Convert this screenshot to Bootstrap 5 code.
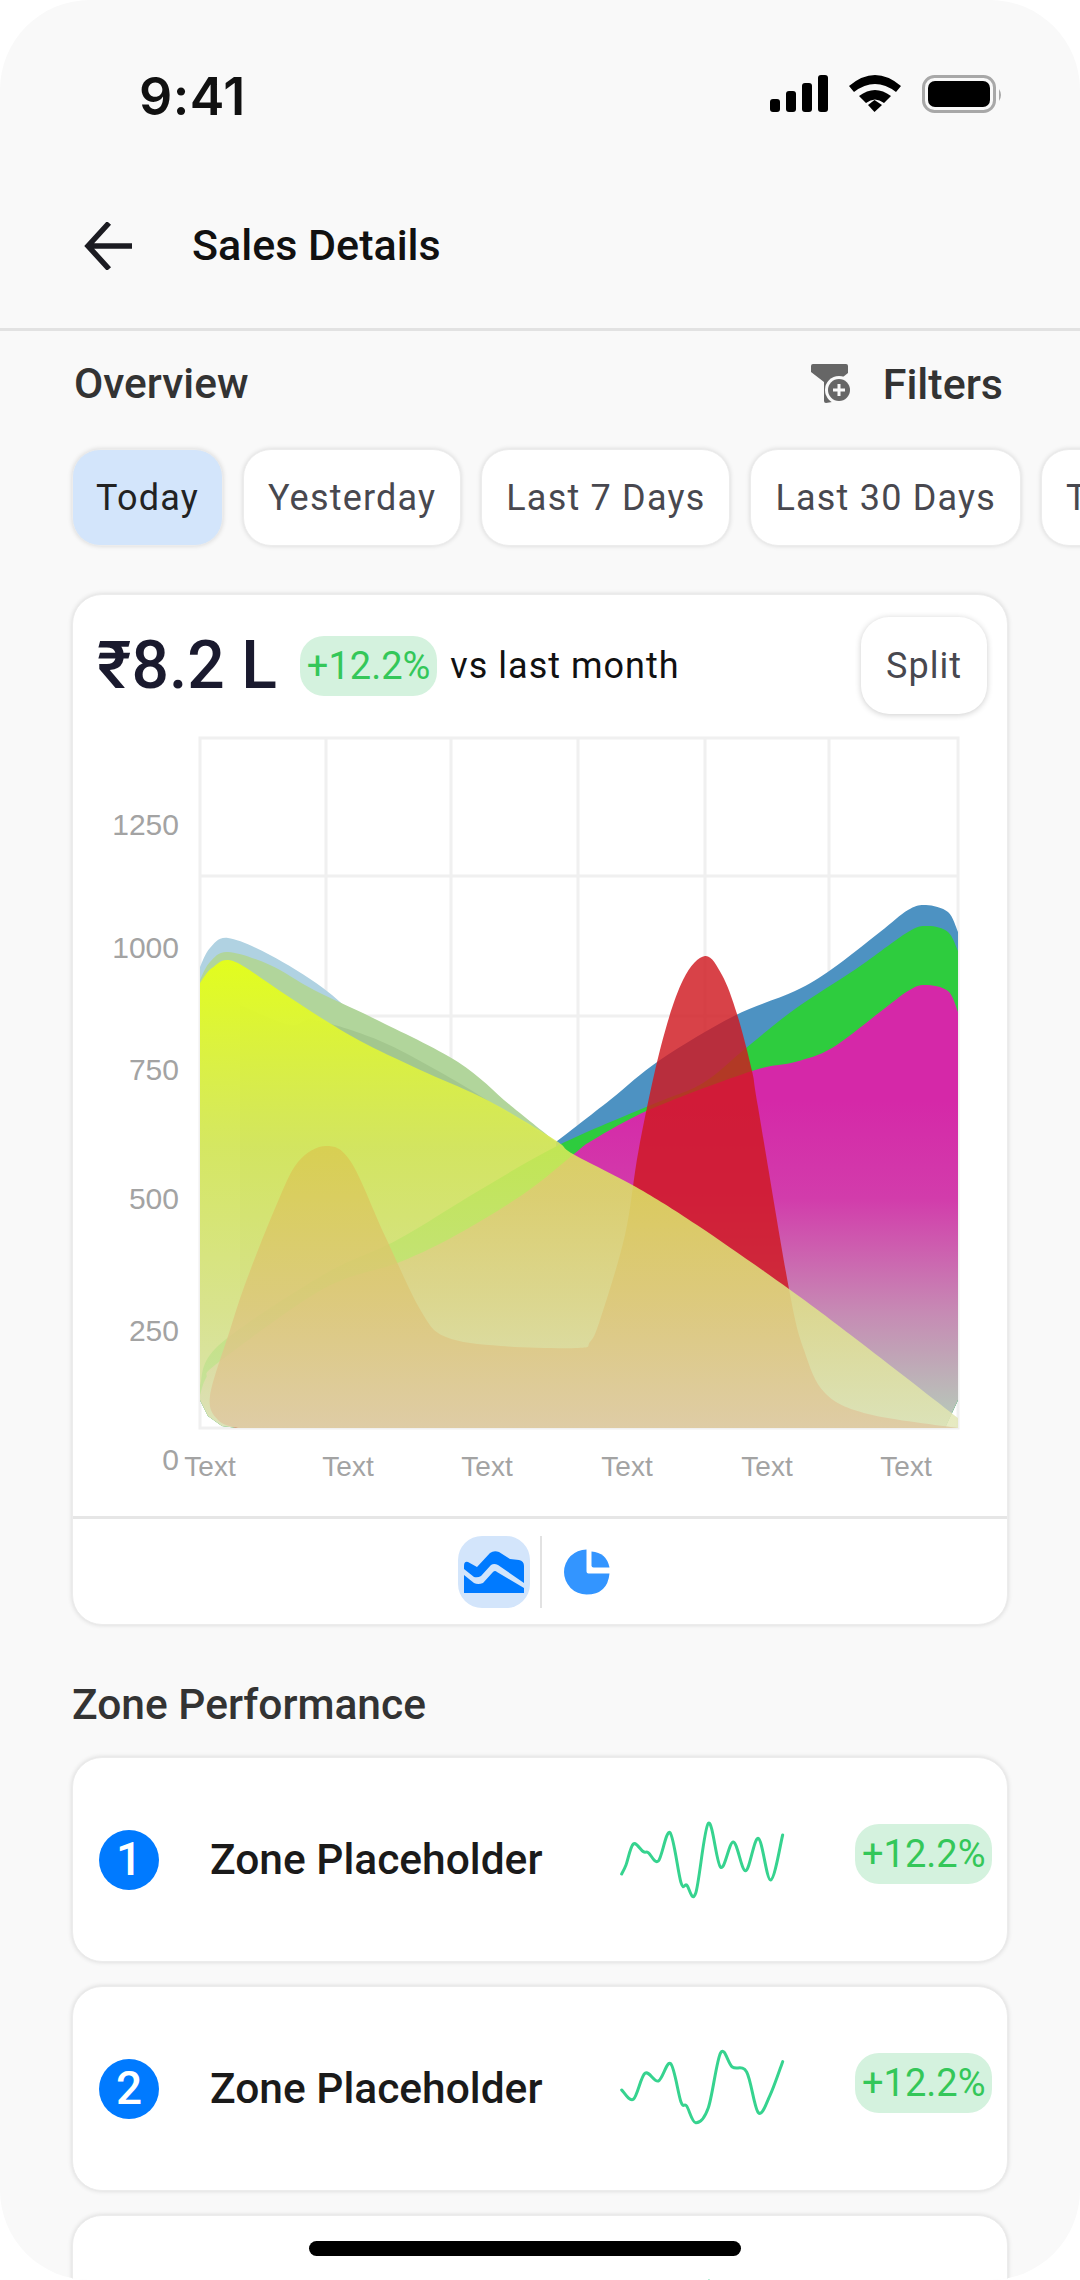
<!DOCTYPE html>
<html lang="en">
  <head>
    <meta charset="UTF-8" />
    <title>Sales Details</title>
    <link href="https://cdn.jsdelivr.net/npm/bootstrap@5.3.3/dist/css/bootstrap.min.css" rel="stylesheet" />
    <style>
      html, body { margin: 0; background: #fff; }
      .screen { width: 1080px; height: 2280px; border-radius: 90px; background: #f9f9f9; overflow: hidden; position: relative; font-family: Roboto, sans-serif; }
      .status-row { height: 170px; padding: 73px 76px 0 139px; }
      .status-time { font-family: Inter, sans-serif; font-weight: 600; font-size: 52px; letter-spacing: .5px; line-height: 48px; color: #111; }
      .status-icons { margin-top: -1px; }
      .top-nav { height: 161px; padding: 0 0 6px 84px; border-bottom: 3px solid #e2e2e2; }
      .top-title { margin: 0 0 0 60px; font-size: 43px; font-weight: 500; color: #111; }
      .page-body { padding: 0 72px; }
      .overview-row { height: 106px; padding: 0 5px 0 2px; margin-bottom: 12px; }
      .section-name { margin: 0; font-size: 42.5px; font-weight: 500; color: #333; line-height: 48px; }
      .filter-text { margin-left: 31px; font-size: 43px; font-weight: 500; color: #333; line-height: 48px; }
      .chip-row { gap: 20px; margin-bottom: 48px; width: 1100px; }
      .chip-btn { height: 97px; padding: 0 24px; flex: none; font-size: 36px; letter-spacing: 1.2px; color: #48484f; background: #fff; border: 1px solid #ececec; border-radius: 28px; box-shadow: 0 0 5px rgba(0,0,0,.14); }
      .chip-btn.is-on { padding: 0 23px; background: #d3e5fb; color: #222; }
      .panel { background: #fff; border: 1px solid #ececec; border-radius: 30px; box-shadow: 0 0 5px rgba(0,0,0,.14); }
      .chart-head { padding: 22px 20px 0 24px; height: 119px; }
      .big-value { margin-right: 23px; font-size: 66px; font-weight: 500; line-height: 97px; color: #1a1a2e; }
      .up-pill { display: inline-block; background: #d4f2de; color: #34c759; font-size: 38px; line-height: 60px; height: 60px; padding: 0 7px; border-radius: 24px; }
      .vs-text { margin-left: 13px; font-size: 36px; letter-spacing: 1px; color: #111; }
      .split-btn { width: 126px; height: 97px; padding: 0; font-size: 36px; letter-spacing: 1px; color: #48484f; background: #fff; border: 0; border-radius: 28px; box-shadow: 0 1px 6px rgba(0,0,0,.2); }
      .chart-svg { display: block; width: 934px; height: 802px; }
      .chart-svg text { font-family: "Liberation Sans", Arial, sans-serif; font-size: 28px; fill: #a3a3a3; }
      .chart-svg .y-tick text { font-size: 30px; }
      .chart-foot { height: 108px; border-top: 3px solid #e6e6e6; padding-top: 17px; }
      .view-btn { width: 72px; height: 72px; border-radius: 24px; }
      .view-btn.is-on { background: #d3e5fb; }
      .view-sep { width: 2px; height: 72px; background: #e2e2e2; margin: 0 9px 0 10px; }
      .zone-title { margin: 56px 0 28px 0; }
      .zone-list { gap: 24px; }
      .zone-row { height: 205px; padding: 0 14px 0 26px; }
      .rank-dot { width: 60px; height: 60px; flex: none; border-radius: 50%; background: #007aff; color: #fff; font-size: 46px; font-weight: 500; }
      .zone-name { margin-left: 51px; width: 410px; flex: none; font-size: 42.5px; font-weight: 500; color: #1a1a1a; white-space: nowrap; }
      .zone-spark { width: 165px; height: 80px; flex: none; }
      .zone-spark path { fill: none; stroke: #36d38f; stroke-width: 9; stroke-linecap: round; }
      .zone-pill { margin: 0 0 12px 70px; flex: none; }
      .home-bar { position: absolute; left: 309px; top: 2241px; width: 432px; height: 15px; border-radius: 8px; background: #000; }
    </style>
  </head>
  <body>
    <div class="screen">
      <div class="status-row d-flex justify-content-between">
        <div class="status-time">9:41</div>
        <svg class="status-icons" width="234" height="44" viewBox="771 74 234 44">
          <rect x="771" y="101" width="10" height="13" rx="3" />
          <rect x="787" y="93" width="10" height="21" rx="3" />
          <rect x="803" y="85" width="10" height="29" rx="3" />
          <rect x="819" y="77" width="10" height="37" rx="3" />
          <path d="M850 88 Q876 66 902 88 L897 94 Q876 78 855 94 Z" />
          <path d="M860 98 Q876 86 892 98 L885 105 Q876 98 867 105 Z" />
          <path d="M869 107 L875.500 102 L883 107 L875.500 114 Z" />
          <rect x="924.500" y="78.500" width="71" height="35" rx="11" fill="none" stroke="#a8a8a8" stroke-width="3" />
          <rect x="929" y="83" width="62" height="26" rx="7" />
          <path d="M1000 91 Q1004 97 1000 103 Z" fill="#a8a8a8" />
        </svg>
      </div>

      <div class="top-nav d-flex align-items-center">
        <svg width="48" height="48" viewBox="0 0 48 48" fill="none" stroke="#1c1c22" stroke-width="5.500">
          <path d="M48 24 H4 M25 1 L4 24 L25 47" />
        </svg>
        <h1 class="top-title">Sales Details</h1>
      </div>

      <div class="page-body">
        <div class="overview-row d-flex justify-content-between align-items-center">
          <h2 class="section-name">Overview</h2>
          <div class="d-flex align-items-center">
            <svg width="42" height="42" viewBox="0 0 42 42">
              <path d="M3 1 H36 Q38 1 38 3 V10 L28 18 L28 38 L16 40 Q14 40 14 38 V19 L1 9 V3 Q1 1 3 1 Z" fill="#666" />
              <circle cx="29" cy="27" r="14" fill="#f9f9f9" />
              <circle cx="29" cy="27" r="11" fill="#666" />
              <path d="M29 21 V33 M23 27 H35" stroke="#f9f9f9" stroke-width="3" />
            </svg>
            <span class="filter-text">Filters</span>
          </div>
        </div>

        <div class="chip-row d-flex">
          <button class="btn chip-btn is-on">Today</button>
          <button class="btn chip-btn">Yesterday</button>
          <button class="btn chip-btn">Last 7 Days</button>
          <button class="btn chip-btn">Last 30 Days</button>
          <button class="btn chip-btn">This Month</button>
        </div>

        <div class="panel">
          <div class="chart-head d-flex justify-content-between align-items-start">
            <div class="d-flex align-items-center">
              <span class="big-value">₹8.2 L</span>
              <span class="up-pill">+12.2%</span>
              <span class="vs-text">vs last month</span>
            </div>
            <button class="btn split-btn">Split</button>
          </div>

          <svg class="chart-svg" viewBox="73 714 934 802">
            <defs>
              <clipPath id="plotClip"><rect x="200" y="737" width="758" height="691" /></clipPath>
              <linearGradient id="pinkFade" gradientUnits="userSpaceOnUse" x1="0" y1="1100" x2="0" y2="1428">
                <stop offset="0" stop-color="#d528a8" />
                <stop offset=".3" stop-color="#d23cab" />
                <stop offset=".65" stop-color="#c68bb4" />
                <stop offset="1" stop-color="#b6ceba" />
              </linearGradient>
              <linearGradient id="yellowFade" gradientUnits="userSpaceOnUse" x1="0" y1="960" x2="0" y2="1428">
                <stop offset="0" stop-color="#e4ff18" stop-opacity=".96" />
                <stop offset=".4" stop-color="#dbea58" stop-opacity=".85" />
                <stop offset=".75" stop-color="#dfe58c" stop-opacity=".85" />
                <stop offset="1" stop-color="#e2e6b8" stop-opacity=".85" />
              </linearGradient>
            </defs>
            <g fill="none" stroke="#f0f0f0" stroke-width="3">
              <rect x="200" y="738" width="758" height="690" />
              <path d="M326 738 V1428 M451 738 V1428 M578 738 V1428 M705 738 V1428 M829 738 V1428" />
              <path d="M200 876 H958 M200 1016 H958 M200 1156 H958 M200 1290 H958" />
            </g>
            <g clip-path="url(#plotClip)">
              <path class="area" fill="#b0d2e2" data-end="556,1428,238,1428,222,1426,208,1416,200,1400" data-pts="200,967 210,948 228,938 270,955 323,988 372,1030 430,1075 500,1110 556,1142" />
              <path class="area" fill="#b1d59b" data-end="556,1428,238,1428,222,1426,208,1416,200,1400" data-pts="200,980 210,962 228,952 270,965 314,990 375,1019 458,1062 510,1105 556,1142" />
              <path class="area" fill="#a3c78e" data-end="556,1428,240,1428" data-pts="240,1005 290,1025 314,1020 378,1040 440,1072 500,1108 556,1142" />
              <path class="area" fill="#4d92c2" data-end="958,1400,945,1428,556,1428" data-pts="556,1142 610,1100 660,1060 734,1016 795,991 832,969 880,932 908,910 926,905 948,912 958,932" />
              <path class="area" fill="#2ecc3e" data-end="958,1400,945,1428,238,1428,222,1426,208,1416,200,1400" data-pts="200,1385 219,1345 323,1275 397,1240 480,1190 559,1145 651,1105 703,1083 746,1048 795,1009 856,969 908,932 928,926 948,932 958,951" />
              <path class="area" fill="url(#pinkFade)" data-end="958,1400,945,1428,238,1428,222,1426,208,1416,200,1400" data-pts="200,1395 206,1378 219,1362 323,1289 400,1262 458,1234 525,1193 574,1154 593,1140 651,1109 752,1071 795,1062 832,1048 880,1012 908,991 925,985 948,991 958,1012" />
              <path class="area" fill="rgb(208,24,32)" fill-opacity=".82" data-end="236,1428" data-pts="236,1428 218,1420 210,1396 230,1330 247,1279 276,1206 298,1162 326,1146 351,1162 385,1236 421,1311 446,1337 501,1346 578,1348 590,1342 600,1320 625,1235 639,1148 661,1046 683,980 705,956 722,975 737,1014 752,1071 758,1107 789,1289 804,1350 825,1393 868,1414 958,1428" />
              <path class="area" fill="url(#yellowFade)" data-end="958,1428,238,1428,222,1426,208,1416,200,1400" data-pts="200,983 212,968 233,961 280,991 323,1019 366,1044 427,1073 489,1101 555,1140 573,1154 636,1187 697,1225 789,1289 856,1339 958,1418" />
            </g>
            <g class="y-tick" text-anchor="end">
              <text x="179" y="835">1250</text>
              <text x="179" y="958">1000</text>
              <text x="179" y="1080">750</text>
              <text x="179" y="1209">500</text>
              <text x="179" y="1341">250</text>
              <text x="179" y="1470">0</text>
            </g>
            <g text-anchor="middle">
              <text x="210" y="1476">Text</text>
              <text x="348" y="1476">Text</text>
              <text x="487" y="1476">Text</text>
              <text x="627" y="1476">Text</text>
              <text x="767" y="1476">Text</text>
              <text x="906" y="1476">Text</text>
            </g>
          </svg>

          <div class="chart-foot d-flex justify-content-center">
            <div class="view-btn is-on d-flex align-items-center justify-content-center">
              <svg width="60" height="42" viewBox="462 1551 60 42" fill="#007aff">
                <path d="M462 1566 Q462 1561 466 1562 L475 1567 L488 1553 Q492 1550 497 1552 L508 1559 L517 1560 Q522 1561 522 1566 V1583 L496 1565 Q492 1563 489 1565 L479 1576 Q476 1578 472 1577 L462 1569 Z" />
                <path d="M462 1575 L472 1583 Q476 1585 481 1583 L491 1572 Q493 1570 495 1572 L522 1588 V1593 H462 Z" />
              </svg>
            </div>
            <div class="view-sep"></div>
            <div class="view-btn d-flex align-items-center justify-content-center">
              <svg width="46" height="46" viewBox="563.500 1550.500 46 46" fill="#3395ff">
                <path d="M586 1551 V1573 Q586 1575 588 1575 H609 Q607 1596 586 1596 A22.500 22.500 0 0 1 586 1551 Z" />
                <path d="M591 1553 Q606 1554 609 1569 H593 Q591 1569 591 1567 Z" />
              </svg>
            </div>
          </div>
        </div>

        <h2 class="section-name zone-title">Zone Performance</h2>

        <div class="zone-list d-flex flex-column">
          <div class="panel zone-row d-flex align-items-center">
            <div class="rank-dot d-flex align-items-center justify-content-center">1</div>
            <div class="zone-name">Zone Placeholder</div>
            <svg class="zone-spark" viewBox="60 90 495 240"><path class="spark-a" /></svg>
            <span class="up-pill zone-pill">+12.2%</span>
          </div>
          <div class="panel zone-row d-flex align-items-center">
            <div class="rank-dot d-flex align-items-center justify-content-center">2</div>
            <div class="zone-name">Zone Placeholder</div>
            <svg class="zone-spark" viewBox="60 90 495 240"><path class="spark-b" /></svg>
            <span class="up-pill zone-pill">+12.2%</span>
          </div>
          <div class="panel zone-row d-flex align-items-center">
            <div class="rank-dot d-flex align-items-center justify-content-center">3</div>
            <div class="zone-name">Zone Placeholder</div>
            <svg class="zone-spark" viewBox="60 90 495 240"><path class="spark-a" /></svg>
            <span class="up-pill zone-pill">+12.2%</span>
          </div>
        </div>
      </div>

      <div class="home-bar"></div>
    </div>

    <script src="https://cdn.jsdelivr.net/npm/bootstrap@5.3.3/dist/js/bootstrap.bundle.min.js"></script>
    <script>
      // catmull-rom through the points, as bezier segments
      function smooth(list) {
        const p = list.trim().split(/\s+/).map((s) => s.split(",").map(Number));
        let d = "M" + p[0].join(" ");
        for (let i = 0; i < p.length - 1; i++) {
          const a = p[i - 1] || p[i];
          const b = p[i];
          const c = p[i + 1];
          const e = p[i + 2] || c;
          d += " C" + (b[0] + (c[0] - a[0]) / 6) + " " + (b[1] + (c[1] - a[1]) / 6) + " " +
            (c[0] - (e[0] - b[0]) / 6) + " " + (c[1] - (e[1] - b[1]) / 6) + " " + c[0] + " " + c[1];
        }
        return d;
      }

      document.querySelectorAll(".area").forEach((el) => {
        const end = el.dataset.end.split(",");
        let tail = "";
        for (let i = 0; i < end.length; i += 2) tail += " L" + end[i] + " " + end[i + 1];
        el.setAttribute("d", smooth(el.dataset.pts) + tail + " Z");
      });

      const sparkA = "65,252 78,225 100,162 130,185 145,188 175,213 210,128 243,278 260,285 287,310 325,100 362,232 400,156 437,242 475,145 512,270 548,135";
      const sparkB = "65,213 100,241 135,163 175,186 212,134 243,249 260,261 287,311 325,266 362,101 397,144 440,159 475,281 510,229 548,128";
      document.querySelectorAll(".spark-a").forEach((el) => el.setAttribute("d", smooth(sparkA)));
      document.querySelectorAll(".spark-b").forEach((el) => el.setAttribute("d", smooth(sparkB)));
    </script>
  </body>
</html>
